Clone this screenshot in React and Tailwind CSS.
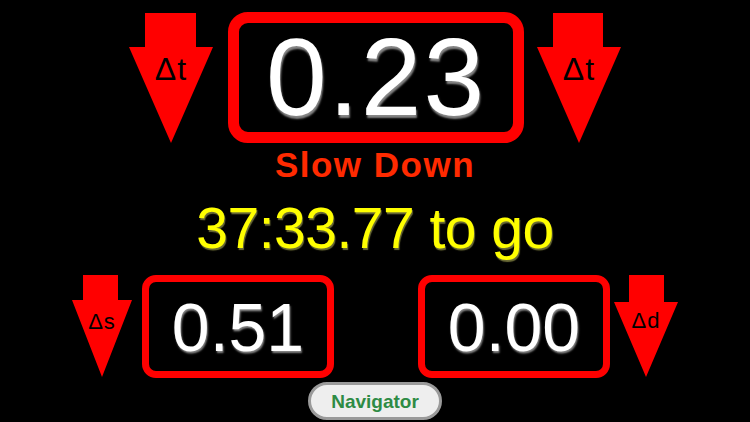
import React from 'react';

const font = { fontFamily: '"Liberation Sans", Arial, sans-serif' };

function Arrow({ w, h, shaftL, shaftR, neck, tipX, label, size, baseline, className }) {
  return (
    <svg width={w} height={h} viewBox={`0 0 ${w} ${h}`} className={className}>
      <polygon
        points={`${shaftL},0 ${shaftR},0 ${shaftR},${neck} ${w},${neck} ${tipX},${h} 0,${neck} ${shaftL},${neck}`}
        fill="#ff0000"
      />
      <text
        x={tipX}
        y={baseline}
        textAnchor="middle"
        fill="#000"
        style={{ ...font, fontSize: `${size}px` }}
        letterSpacing="1"
      >
        {label}
      </text>
    </svg>
  );
}

function ValueBox({ value, big }) {
  if (big) {
    return (
      <div className="w-[296px] h-[131px] border-[11px] border-[#ff0000] rounded-[20px] flex items-center justify-center">
        <span className="text-white text-[109px] leading-none tracking-[2px] [text-shadow:1px_3px_2px_rgba(150,150,150,0.9)]">
          {value}
        </span>
      </div>
    );
  }
  return (
    <div className="w-[192px] h-[103px] border-[7px] border-[#ff0000] rounded-[14px] flex items-center justify-center">
      <span className="text-white text-[68px] leading-none [text-shadow:1px_2px_2px_rgba(150,150,150,0.9)]">
        {value}
      </span>
    </div>
  );
}

export default function App() {
  return (
    <div className="w-[750px] h-[422px] bg-black overflow-hidden flex flex-col items-center pt-[12px]" style={font}>
      <div className="flex items-start">
        <Arrow w={84} h={130} shaftL={16} shaftR={67} neck={34} tipX={42} label="Δt" size={32} baseline={67} className="mt-[1px]" />
        <div className="ml-[15px] mr-[13px]">
          <ValueBox value="0.23" big />
        </div>
        <Arrow w={84} h={130} shaftL={16} shaftR={66} neck={34} tipX={42} label="Δt" size={32} baseline={67} className="mt-[1px]" />
      </div>

      <div className="mt-[4px] text-[35px] leading-[35px] font-bold tracking-[1.5px] text-[#ff2a00]">
        Slow Down
      </div>

      <div className="mt-[16px] text-[57px] leading-[60px] tracking-[-0.5px] text-[#ffff00] [text-shadow:1px_2px_1px_rgba(120,120,60,0.9)]">
        37:33.77 to go
      </div>

      <div className="mt-[17px] flex items-start">
        <Arrow w={60} h={102} shaftL={11} shaftR={46} neck={25} tipX={30} label="Δs" size={22} baseline={54} />
        <div className="ml-[10px] mr-[84px]">
          <ValueBox value="0.51" />
        </div>
        <ValueBox value="0.00" />
        <Arrow w={64} h={102} shaftL={15} shaftR={50} neck={27} tipX={32} label="Δd" size={22} baseline={53} className="ml-[4px]" />
      </div>

      <button className="mt-[4px] w-[134px] h-[38px] rounded-full border-[3px] border-[#9a9a9a] bg-[#eeeeee] text-[#2e8b44] text-[19px] font-bold leading-none flex items-center justify-center">
        Navigator
      </button>
    </div>
  );
}
